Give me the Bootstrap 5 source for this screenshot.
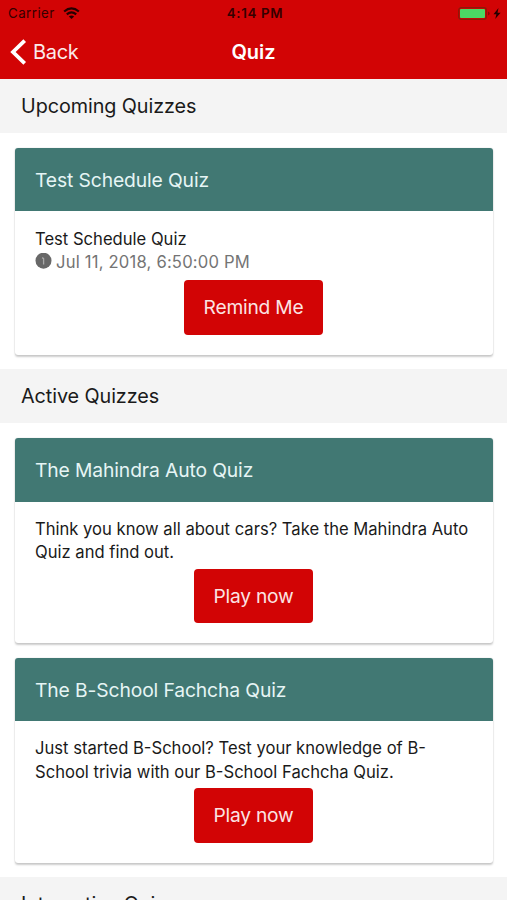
<!DOCTYPE html>
<html lang="en">
<head>
<meta charset="utf-8">
<meta name="viewport" content="width=device-width, initial-scale=1">
<title>Quiz</title>
<link rel="stylesheet" href="https://cdn.jsdelivr.net/npm/bootstrap@5.3.0/dist/css/bootstrap.min.css">
<style>
body { font-family: Inter, "Liberation Sans", sans-serif; color: #1a1a1a; height: 900px; overflow: hidden; }
.app-header { background: #d20405; height: 79px; }
.status-bar { height: 27px; font-size: 13.3px; line-height: 27px; color: #350000; padding: 0 5px 0 8px; }
.status-bar .carrier { letter-spacing: .45px; }
.status-bar .clock { font-size: 13.3px; letter-spacing: .7px; }
.title-bar { height: 49.5px; padding: 0 10px; color: #fff; font-size: 20px; line-height: 50px; }
.side { flex: 1 1 0; }
.back-link { color: #fbeaea; letter-spacing: -.3px; gap: 6px; }
.section-title { background: #f4f4f4; height: 54px; line-height: 55px; padding-left: 21px; font-size: 19.8px; letter-spacing: -.08px; margin: 0; font-weight: 400; }
.quiz-list { padding: 14.7px 14.5px; gap: 14.6px; }
.quiz-card { border: 0; border-radius: 3px; box-shadow: 0 1.5px 2px rgba(0,0,0,.2), 0 0 1.5px rgba(0,0,0,.12); }
.quiz-card .card-header { background: #417873; color: #e6f5f5; height: 63.5px; line-height: 65px; font-size: 19.3px; letter-spacing: -.12px; padding: 0 20.5px; border: 0; border-radius: 3px 3px 0 0; }
.quiz-card .card-body { padding: 16.4px 20.5px 20px; font-size: 16.6px; line-height: 23.1px; }
.quiz-date { color: #747474; gap: 4px; margin-bottom: 2px; }
.quiz-date .when { letter-spacing: .2px; }
.btn-quiz { --bs-btn-color: #fbe3e3; --bs-btn-bg: #d20405; --bs-btn-hover-bg: #b80304; --bs-btn-hover-color: #fff; height: 54.3px; padding: 0 19.2px; border: 0; border-radius: 4px; font-size: 19.2px; letter-spacing: -.2px; line-height: 55px; margin-top: 4.6px; }
</style>
<script src="https://cdn.jsdelivr.net/npm/bootstrap@5.3.0/dist/js/bootstrap.bundle.min.js"></script>
</head>
<body>
<header class="app-header">
  <div class="status-bar d-flex align-items-center">
    <div class="side d-flex align-items-center">
      <span class="carrier">Carrier</span>
      <svg class="ms-2" width="17" height="13" viewBox="0 0 18 13" fill="none" stroke="#250000" stroke-width="2.3"><path d="M1.2 4.4Q9-2.2 16.8 4.4M4 7.5Q9 3.3 14 7.5"/><path d="M9 12.4 6.2 9.6Q9 7.6 11.8 9.6Z" fill="#250000" stroke="none"/></svg>
    </div>
    <span class="clock fw-semibold">4:14 PM</span>
    <div class="side d-flex align-items-center justify-content-end">
      <svg width="44" height="14" viewBox="0 0 44 14"><rect x=".7" y=".7" width="27.6" height="11.6" rx="2.5" fill="none" stroke="#8c1a08" stroke-width="1.3"/><rect x="2" y="1.9" width="25" height="9.2" rx="1" fill="#4bd964"/><path d="M30 4.5v4q1.7-.6 1.7-2t-1.7-2z" fill="#8c0505"/><path d="M40.5 1.1 35.5 7.3H38.4L37.2 12.1 42.6 5.7H39.5Z" fill="#250000"/></svg>
    </div>
  </div>
  <nav class="title-bar d-flex align-items-center">
    <div class="side d-flex">
      <a class="back-link d-flex align-items-center text-decoration-none" href="#"><svg width="17" height="26" viewBox="0 0 17 26" fill="none" stroke="#fff" stroke-width="3.8"><path d="M14.7 1.6 3 13 14.7 24.4"/></svg><span>Back</span></a>
    </div>
    <span class="screen-title fw-semibold">Quiz</span>
    <div class="side"></div>
  </nav>
</header>
<main>
  <h2 class="section-title">Upcoming Quizzes</h2>
  <section class="quiz-list d-flex flex-column">
    <article class="card quiz-card">
      <div class="card-header">Test Schedule Quiz</div>
      <div class="card-body">
        <div>Test Schedule Quiz</div>
        <div class="quiz-date d-flex align-items-center"><svg width="17" height="18" viewBox="0 0 17 18"><circle cx="8.5" cy="7.7" r="8" fill="#686868"/><path d="M7.2 4.6 8.6 5.6V11.6" fill="none" stroke="#a9a9a9" stroke-width="1.3"/></svg><span class="when">Jul 11, 2018, 6:50:00 PM</span></div>
        <div class="text-center"><button class="btn btn-quiz">Remind Me</button></div>
      </div>
    </article>
  </section>
  <h2 class="section-title">Active Quizzes</h2>
  <section class="quiz-list d-flex flex-column">
    <article class="card quiz-card">
      <div class="card-header">The Mahindra Auto Quiz</div>
      <div class="card-body">
        <div>Think you know all about cars? Take the Mahindra Auto Quiz and find out.</div>
        <div class="text-center"><button class="btn btn-quiz">Play now</button></div>
      </div>
    </article>
    <article class="card quiz-card">
      <div class="card-header">The B-School Fachcha Quiz</div>
      <div class="card-body">
        <div>Just started B-School? Test your knowledge of B-School trivia with our B-School Fachcha Quiz.</div>
        <div class="text-center"><button class="btn btn-quiz">Play now</button></div>
      </div>
    </article>
  </section>
  <h2 class="section-title">Interactive Quizzes</h2>
</main>
</body>
</html>
